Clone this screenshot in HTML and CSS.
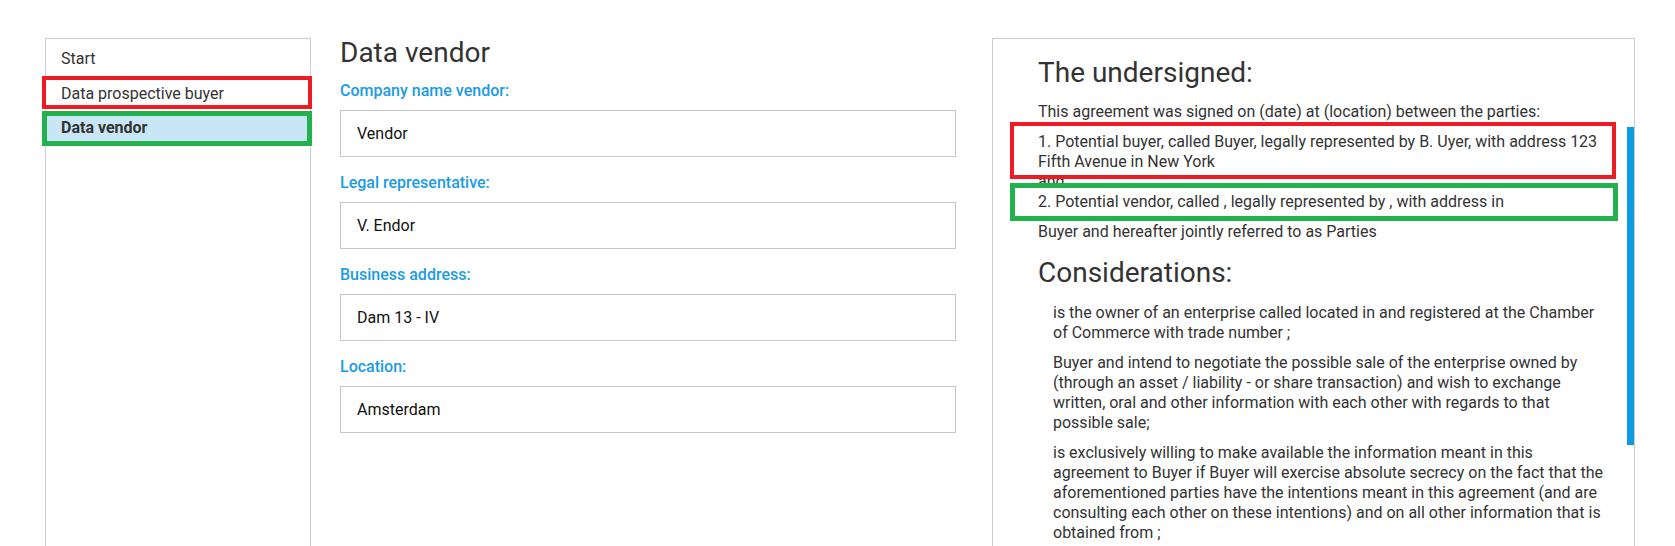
FILE: index.html
```html
<!DOCTYPE html>
<html lang="en">
<head>
<meta charset="utf-8">
<title>Data vendor</title>
<link rel="stylesheet" href="styles.css">
</head>
<body>
<div class="page">
  <nav class="steps">
    <div class="step">Start</div>
    <div class="step">Data prospective buyer</div>
    <div class="step active">Data vendor</div>
  </nav>

  <main class="form">
    <h1 class="form-title">Data vendor</h1>
    <div class="field">
      <label class="field-label">Company name vendor:</label>
      <div class="field-input">Vendor</div>
    </div>
    <div class="field">
      <label class="field-label">Legal representative:</label>
      <div class="field-input">V. Endor</div>
    </div>
    <div class="field">
      <label class="field-label">Business address:</label>
      <div class="field-input">Dam 13 - IV</div>
    </div>
    <div class="field">
      <label class="field-label">Location:</label>
      <div class="field-input">Amsterdam</div>
    </div>
  </main>

  <section class="preview">
    <div class="doc">
      <h2 class="doc-title">The undersigned:</h2>
      <p class="doc-p">This agreement was signed on (date) at (location) between the parties:</p>
      <p class="doc-p tight">1. Potential buyer, called Buyer, legally represented by B. Uyer, with address 123 Fifth Avenue in New York</p>
      <p class="doc-p tight">and</p>
      <p class="doc-p tight">2. Potential vendor, called , legally represented by , with address in</p>
      <p class="doc-p">Buyer and hereafter jointly referred to as Parties</p>
      <h2 class="doc-title second">Considerations:</h2>
      <p class="doc-p item">is the owner of an enterprise called located in and registered at the Chamber of Commerce with trade number ;</p>
      <p class="doc-p item">Buyer and intend to negotiate the possible sale of the enterprise owned by (through an asset / liability - or share transaction) and wish to exchange written, oral and other information with each other with regards to that possible sale;</p>
      <p class="doc-p item">is exclusively willing to make available the information meant in this agreement to Buyer if Buyer will exercise absolute secrecy on the fact that the aforementioned parties have the intentions meant in this agreement (and are consulting each other on these intentions) and on all other information that is obtained from ;</p>
    </div>
    <div class="scroll-thumb"></div>
  </section>

  <div class="mark mark-red mark-left-red"></div>
  <div class="mark mark-green mark-left-green"></div>
  <div class="mark mark-red mark-right-red"></div>
  <div class="mark mark-green mark-right-green"></div>
</div>
</body>
</html>
```

FILE: styles.css
```css
html, body {
  margin: 0;
  padding: 0;
  background: #ffffff;
  overflow: hidden;
}

body {
  font-family: Roboto, "Liberation Sans", Arial, sans-serif;
  color: #333333;
  font-size: 16px;
}

.page {
  position: relative;
  display: flex;
  align-items: flex-start;
  padding: 38px 0 0 45px;
  height: 546px;
  box-sizing: border-box;
  overflow: hidden;
}

/* Sidebar steps */
.steps {
  width: 266px;
  height: 560px;
  box-sizing: border-box;
  border: 1px solid #cccccc;
  padding-top: 3px;
  flex: none;
}

.step {
  height: 34.5px;
  line-height: 34.5px;
  padding-left: 15px;
  color: #333333;
  font-size: 16px;
}

.step.active {
  background: #c8e6f5;
  font-weight: 700;
  color: #333333;
}

/* Form */
.form {
  width: 616px;
  margin-left: 29px;
  flex: none;
}

.form-title {
  margin: 0;
  font-size: 28px;
  line-height: 30px;
  font-weight: 400;
  color: #333333;
}

.field {
  display: flex;
  flex-direction: column;
  margin-top: 13.4px;
}

.field + .field {
  margin-top: 16.4px;
}

.field-label {
  font-size: 16px;
  line-height: 20px;
  font-weight: 500;
  color: #1a9be6;
  margin-bottom: 8.6px;
}

.field-input {
  height: 47px;
  box-sizing: border-box;
  border: 1px solid #c6c6c6;
  padding-left: 16px;
  line-height: 45px;
  font-size: 16px;
  color: #111111;
}

/* Preview document */
.preview {
  position: relative;
  width: 643px;
  height: 560px;
  margin-left: 36px;
  box-sizing: border-box;
  border: 1px solid #cccccc;
  overflow: hidden;
  flex: none;
}

.doc {
  padding: 19.4px 27px 0 45px;
}

.doc-title {
  margin: 0 0 14px;
  font-size: 28px;
  line-height: 30px;
  font-weight: 400;
  color: #333333;
}

.doc-title.second {
  margin-top: 15.4px;
  margin-bottom: 15px;
}

.doc-p {
  margin: 0 0 10px;
  font-size: 16px;
  line-height: 20px;
  color: #333333;
}

.doc-p.tight {
  margin-bottom: 0;
}

.doc-p.tight + .doc-p:not(.tight) {
  margin-top: 10px;
}

.doc-p.item {
  padding-left: 15px;
}

.scroll-thumb {
  position: absolute;
  right: 0;
  top: 88px;
  width: 7px;
  height: 318px;
  background: #0a9be3;
}

/* Annotation overlays */
.mark {
  position: absolute;
  box-sizing: border-box;
  pointer-events: none;
}

.mark-red {
  border: 4px solid #ed1c24;
}

.mark-green {
  border: 5px solid #22b14c;
}

.mark-left-red {
  left: 42px;
  top: 76px;
  width: 270px;
  height: 33px;
}

.mark-left-green {
  left: 42px;
  top: 111px;
  width: 270px;
  height: 35px;
}

.mark-right-red {
  left: 1010px;
  top: 122px;
  width: 606px;
  height: 57px;
}

.mark-right-green {
  left: 1010px;
  top: 183px;
  width: 608px;
  height: 38px;
}
```
